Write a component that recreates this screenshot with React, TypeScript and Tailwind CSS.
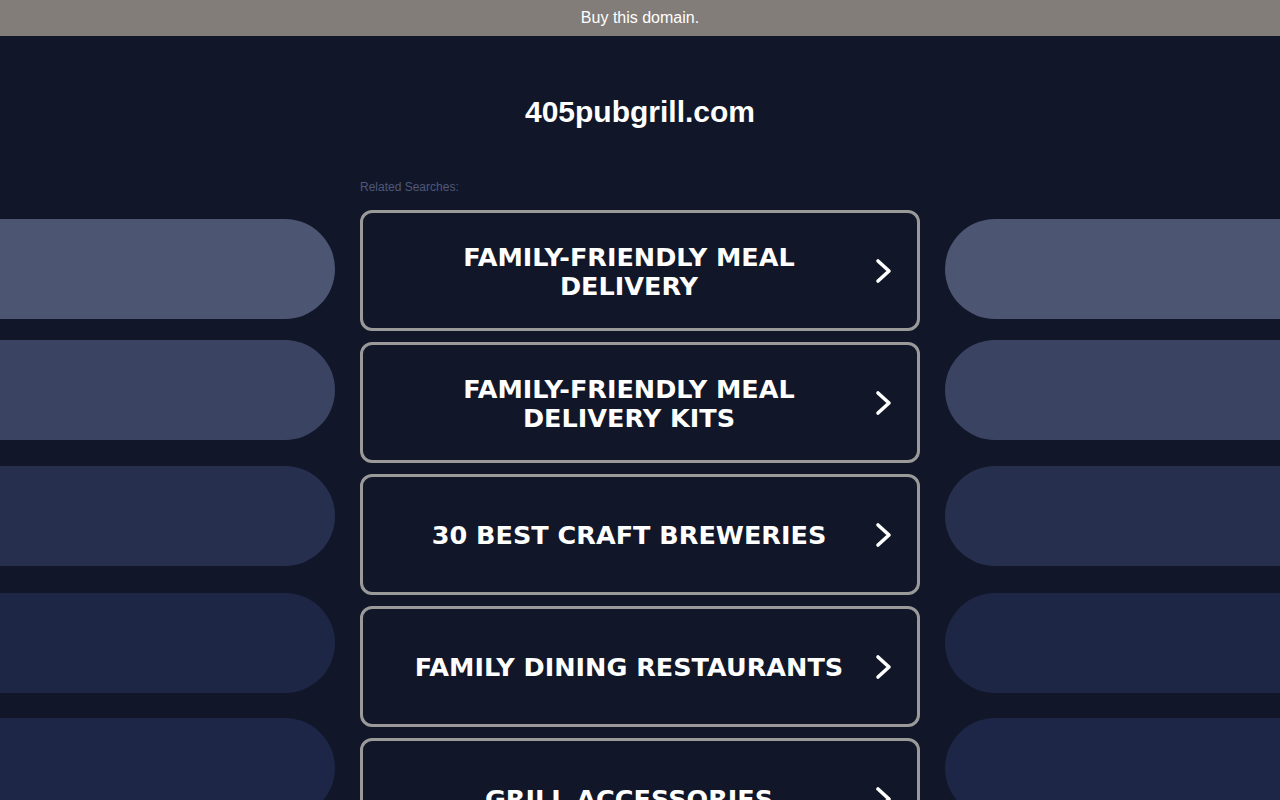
import React from 'react';

const searches = [
  ['FAMILY-FRIENDLY MEAL', 'DELIVERY'],
  ['FAMILY-FRIENDLY MEAL', 'DELIVERY KITS'],
  ['30 BEST CRAFT BREWERIES'],
  ['FAMILY DINING RESTAURANTS'],
  ['GRILL ACCESSORIES'],
];

const pills = [
  { bg: 'bg-[#4c5673]', mt: 'mt-[183px]' },
  { bg: 'bg-[#3a4362]', mt: 'mt-[21px]' },
  { bg: 'bg-[#262f4e]', mt: 'mt-[26px]' },
  { bg: 'bg-[#1e2646]', mt: 'mt-[27px]' },
  { bg: 'bg-[#1d2647]', mt: 'mt-[25px]' },
];

const Chevron = () => (
  <svg width="18" height="26" viewBox="0 0 18 26" fill="none">
    <path d="M3 3l11 10L3 23" stroke="white" strokeWidth={3.6} strokeLinecap="round" strokeLinejoin="round" />
  </svg>
);

const PillColumn: React.FC<{ side: 'left' | 'right' }> = ({ side }) => (
  <div className="flex flex-col w-[335px] shrink-0">
    {pills.map((p, i) => (
      <div
        key={i}
        className={`${p.mt} ${p.bg} h-[100px] shrink-0 ${side === 'left' ? 'rounded-r-[50px]' : 'rounded-l-[50px]'}`}
      />
    ))}
  </div>
);

export default function App() {
  return (
    <div className="h-[800px] overflow-hidden bg-[#111729] font-['Liberation_Sans',Arial,sans-serif]">
      <div className="h-[36px] bg-[#827d79] flex items-center justify-center text-white text-[16px] leading-none">
        Buy this domain.
      </div>
      <div className="flex justify-between">
        <PillColumn side="left" />
        <div className="w-[560px] shrink-0 flex flex-col">
          <h1 className="text-white font-bold text-[30px] leading-[34px] text-center mt-[59px]">405pubgrill.com</h1>
          <div className="mt-[51px] text-[12px] leading-[14px] text-[#4f5878]">Related Searches:</div>
          <div className="mt-[16px] flex flex-col gap-[11px]">
            {searches.map((lines, i) => (
              <div
                key={i}
                className="h-[121px] shrink-0 border-[3px] border-[#9a9a9a] rounded-[12px] flex items-center pr-[24px]"
              >
                <div className="flex-1 text-center text-white font-bold text-[25.5px] leading-[29px] font-['DejaVu_Sans',Verdana,sans-serif] pl-[20px] pt-[2px]">
                  {lines.map((l, j) => (
                    <div key={j}>{l}</div>
                  ))}
                </div>
                <Chevron />
              </div>
            ))}
          </div>
        </div>
        <PillColumn side="right" />
      </div>
    </div>
  );
}
